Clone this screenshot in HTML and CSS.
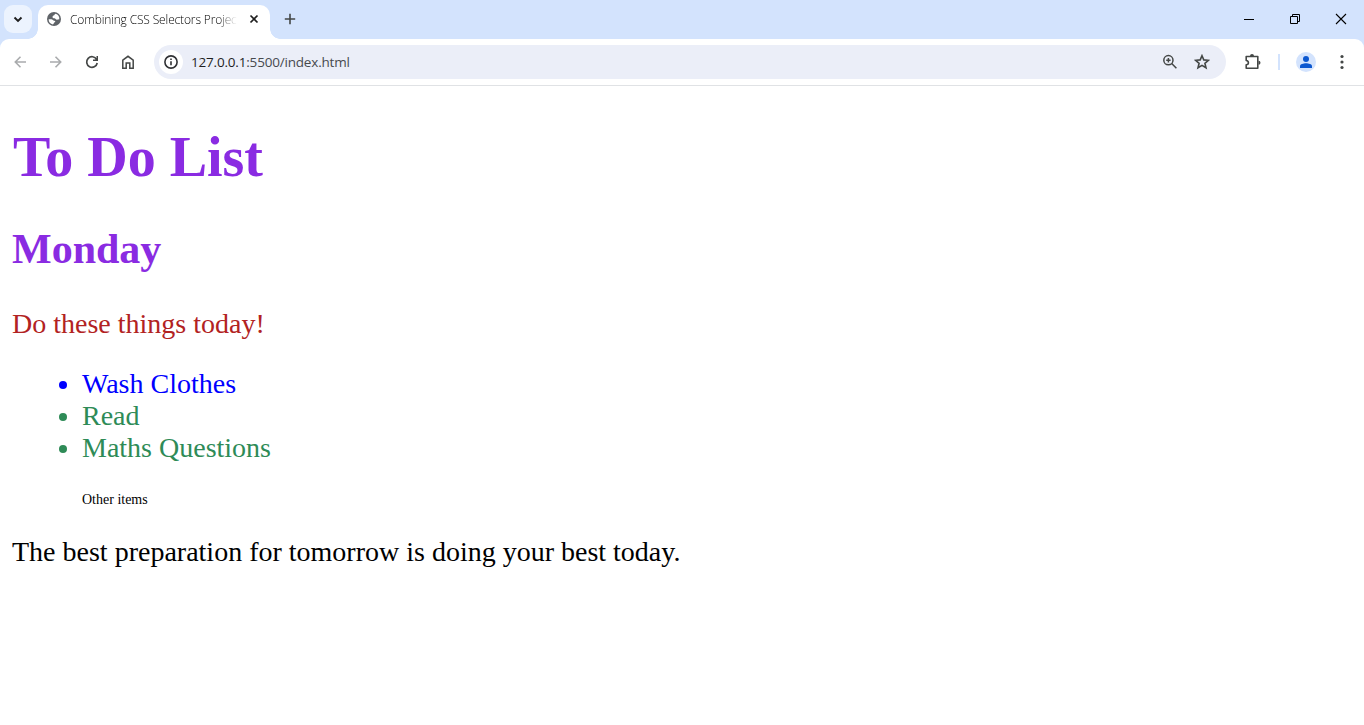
FILE: index.html
```html
<!DOCTYPE html>
<html lang="en">
<head>
<meta charset="utf-8">
<title>Combining CSS Selectors Project</title>
<link rel="stylesheet" href="styles.css">
</head>
<body>
<header class="browser">
  <div class="tab-strip">
    <button class="tab-search" aria-label="Search tabs"><svg width="10" height="7" viewBox="0 0 10 7"><path d="M1.500 1.500 5 5l3.500-3.500" fill="none" stroke="#1f1f1f" stroke-width="1.900"/></svg></button>
    <div class="tab">
      <svg class="favicon" width="14" height="14" viewBox="0 0 14 14"><circle cx="7" cy="7" r="7" fill="#5f6368"/><path d="M8.600 1.700C7 2.300 8 3.100 6.500 3.500 5.400 3.800 5.200 5.400 6 6c.8.6 2 .1 2.600 1 .6.900 1.800.7 3.700.2A5.400 5.400 0 0 0 8.600 1.700zM1.600 7.200h2.700c1.500 0 1.500 1.400 3 1.500 1.200.1 1.300 1.200.3 1.600-1 .4-.5 1.600-1.600 2.100A5.400 5.400 0 0 1 1.600 7.200z" fill="#fff"/></svg>
      <span class="tab-title">Combining CSS Selectors Project</span>
      <svg class="tab-close" width="10" height="10" viewBox="0 0 10 10"><path d="M1.500 1.500l7 7m0-7-7 7" stroke="#1f1f1f" stroke-width="1.700"/></svg>
    </div>
    <svg class="new-tab" width="12" height="12" viewBox="0 0 12 12"><path d="M6 .8v10.400M.8 6h10.400" stroke="#444746" stroke-width="1.600"/></svg>
    <div class="window-controls">
      <svg width="46" height="38" viewBox="0 0 46 38"><path d="M18 19.500h10" stroke="#000"/></svg>
      <svg width="46" height="38" viewBox="0 0 46 38"><path d="M18.500 16.500h7v7h-7zM20.500 16.500v-2h7v7h-2" fill="none" stroke="#000"/></svg>
      <svg width="46" height="38" viewBox="0 0 46 38"><path d="M18 14l10 10m0-10L18 24" stroke="#000" stroke-width="1.100"/></svg>
    </div>
  </div>
  <div class="toolbar">
    <div class="nav">
      <svg width="36" height="36" viewBox="0 0 36 36"><path d="M24 18H13.500m5-5.200L13.300 18l5.200 5.200" fill="none" stroke="#a9abad" stroke-width="1.600"/></svg>
      <svg width="36" height="36" viewBox="0 0 36 36"><path d="M12 18h10.500m-5-5.200 5.200 5.200-5.200 5.200" fill="none" stroke="#a9abad" stroke-width="1.600"/></svg>
      <svg width="36" height="36" viewBox="0 0 36 36"><path d="M22.600 15.400a5.300 5.300 0 1 0 .6 3.600" fill="none" stroke="#444746" stroke-width="1.700"/><path d="M24 12v5h-5v-1.500h2.300l1.200-1.400V12z" fill="#444746"/></svg>
      <svg width="36" height="36" viewBox="0 0 36 36"><path d="M12.800 16.200 18 12.300l5.200 3.900v8.100h-3.400v-5.200h-3.600v5.200h-3.400z" fill="none" stroke="#444746" stroke-width="1.500"/></svg>
    </div>
    <div class="address-bar">
      <span class="site-info"><svg width="14" height="14" viewBox="0 0 14 14"><circle cx="7" cy="7" r="6.100" fill="none" stroke="#303134" stroke-width="1.600"/><path d="M7 6.200v4.100M7 3.500v1.600" stroke="#303134" stroke-width="1.600"/></svg></span>
      <span class="url"><span class="host">127.0.0.1</span>:5500/index.html</span>
      <svg class="zoom" width="16" height="16" viewBox="0 0 16 16"><circle cx="6.400" cy="6.200" r="4.600" fill="none" stroke="#444746" stroke-width="1.500"/><path d="M9.700 9.500l4.700 4.700M6.400 4v4.400M4.200 6.200h4.400" stroke="#444746" stroke-width="1.500"/></svg>
      <svg class="star" width="16" height="16" viewBox="0 0 16 16"><path d="M8 1.700l1.800 4.200 4.600.4-3.500 3 1.100 4.500L8 11.400l-4 2.400 1.100-4.500-3.500-3 4.600-.4z" fill="none" stroke="#444746" stroke-width="1.600"/></svg>
    </div>
    <svg class="extensions" width="18" height="18" viewBox="0 0 18 18"><path d="M2.200 3.500h11.600v11.800H2.200v-3.500q2.200-.2 2.200-2.100T2.200 7.500z" fill="none" stroke="#444746" stroke-width="1.600" stroke-linejoin="round"/><path d="M6 3a2 2 0 0 1 4 0zM14.500 7.700a2 2 0 0 1 0 4z" fill="#444746"/></svg>
    <span class="divider"></span>
    <span class="profile"><svg width="14" height="14" viewBox="0 0 14 14"><circle cx="7" cy="4" r="3" fill="#0b57d0"/><path d="M1 13v-1.800C1 9.200 4.500 8.300 7 8.300s6 .9 6 2.900V13z" fill="#0b57d0"/></svg></span>
    <svg class="menu" width="4" height="16" viewBox="0 0 4 16"><g fill="#444746"><circle cx="2" cy="2.500" r="1.600"/><circle cx="2" cy="8" r="1.600"/><circle cx="2" cy="13.500" r="1.600"/></g></svg>
  </div>
</header>
<main class="page">
  <h1 class="title">To Do List</h1>
  <h2 class="day">Monday</h2>
  <p class="intro">Do these things today!</p>
  <ul class="todo">
    <li class="first">Wash Clothes</li>
    <li>Read</li>
    <li>Maths Questions</li>
  </ul>
  <p class="other">Other items</p>
  <p class="quote">The best preparation for tomorrow is doing your best today.</p>
</main>
</body>
</html>
```
FILE: styles.css
```css
* { box-sizing: border-box; }
body { margin: 0; height: 725px; overflow: hidden; background: #fff; font-family: "Liberation Serif", serif; }
svg { display: block; flex: none; }
.browser { height: 86px; background: #d3e3fd; font-family: "Open Sans", sans-serif; }
.tab-strip { display: flex; height: 39px; padding-left: 4px; }
.tab-search { display: flex; align-items: center; justify-content: center; width: 28px; height: 28px; margin: 5px 6px 0 0; padding: 0; border: 0; border-radius: 9px; background: #ecf3fe; }
.tab { position: relative; display: flex; align-items: center; width: 232px; height: 34px; margin-top: 5px; padding: 0 11px 6px 9px; border-radius: 10px 10px 0 0; background: #fff; }
.tab::before, .tab::after { content: ""; position: absolute; bottom: 0; width: 10px; height: 10px; }
.tab::before { left: -10px; background: radial-gradient(circle at 0 0, transparent 9.500px, #fff 10px); }
.tab::after { right: -10px; background: radial-gradient(circle at 100% 0, transparent 9.500px, #fff 10px); }
.tab-title { width: 167px; margin-left: 9px; padding-top: 1px; overflow: hidden; white-space: nowrap; font-size: 12px; font-weight: 300; line-height: 18px; letter-spacing: -0.15px; color: #000; mask-image: linear-gradient(to right, #000 148px, transparent); }
.tab-close { margin-left: auto; }
.new-tab { margin: 13px 0 0 14px; }
.window-controls { display: flex; margin-left: auto; }
.toolbar { display: flex; align-items: center; height: 47px; padding: 0 20px 1px 2px; border-bottom: 1px solid #e0e2e5; border-radius: 9px 9px 0 0; background: #fff; }
.nav { display: flex; }
.address-bar { display: flex; align-items: center; width: 1072px; height: 34px; margin-left: 8px; padding: 0 16px 0 5px; border-radius: 17px; background: #ebeef8; }
.site-info { display: flex; align-items: center; justify-content: center; width: 24px; height: 24px; border-radius: 50%; background: #fff; }
.url { margin-left: 8px; padding-top: 1px; font-size: 13.5px; line-height: 20px; letter-spacing: -0.19px; color: #474a4e; }
.host { color: #1f1f1f; }
.zoom { margin-left: auto; }
.star { margin-left: 16px; }
.extensions { margin-left: 18px; }
.divider { width: 2px; height: 16px; margin-left: 16px; background: #d3e3fd; }
.profile { display: flex; align-items: center; justify-content: center; width: 20px; height: 20px; margin-left: 16px; border-radius: 50%; background: #d3e3fd; }
.menu { margin-left: auto; }
.page { display: flow-root; padding-left: 12px; font-size: 28px; line-height: 32px; }
.title { margin: 39px 0 36px; font-size: 56px; line-height: 64px; text-indent: 1px; color: blueviolet; }
.day { margin: 0 0 35px; font-size: 42px; line-height: 48px; color: blueviolet; }
.intro { margin: 0 0 28px; color: #b22222; }
.todo { margin: 0; padding-left: 70px; color: seagreen; }
.first { color: blue; }
.other { margin: 28px 0 28px 70px; font-size: 14px; line-height: 16px; }
.quote { margin: 0; }
```
